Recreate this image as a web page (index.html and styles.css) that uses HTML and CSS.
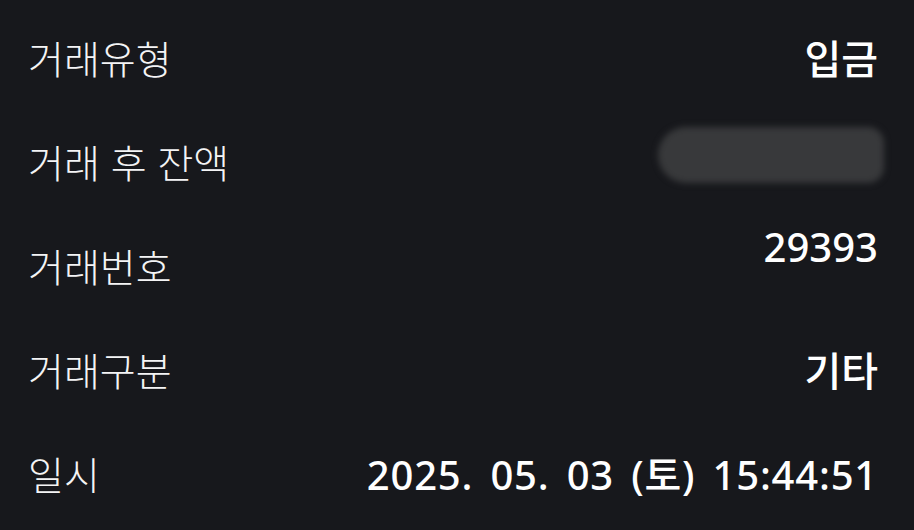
FILE: index.html
```html
<!DOCTYPE html>
<html lang="ko">
<head>
<meta charset="utf-8">
<link rel="stylesheet" href="styles.css">
</head>
<body>
<div class="list">
  <div class="row"><span class="label">거래유형</span><span class="value">입금</span></div>
  <div class="row"><span class="label">거래 후 잔액</span><span class="redact"></span></div>
  <div class="row"><span class="label">거래번호</span><span class="value raised">29393</span></div>
  <div class="row"><span class="label">거래구분</span><span class="value">기타</span></div>
  <div class="row"><span class="label">일시</span><span class="value date">2025. 05. 03 (토) 15:44:51</span></div>
</div>
</body>
</html>
```
FILE: styles.css
```css
html, body {
  margin: 0;
  padding: 0;
  background: #17181c;
}
body {
  width: 914px;
  height: 530px;
  overflow: hidden;
  font-family: "Noto Sans", "Noto Sans CJK KR", sans-serif;
  color: #ffffff;
}
.list {
  display: flex;
  flex-direction: column;
  padding: 5px 36px 0 28px;
}
.row {
  height: 104px;
  display: flex;
  align-items: center;
  justify-content: space-between;
}
.label {
  font-family: "Noto Sans CJK KR", sans-serif;
  font-size: 39px;
  font-weight: 300;
  color: #f4f4f5;
}
.value {
  font-family: "Noto Sans", "Noto Sans CJK KR", sans-serif;
  font-size: 40px;
  font-weight: 500;
  letter-spacing: 0;
  color: #ffffff;
}
.date {
  letter-spacing: 0.8px;
  word-spacing: 6px;
}
.raised {
  margin-bottom: 38px;
}
.redact {
  width: 226px;
  height: 56px;
  margin-right: -6px;
  margin-bottom: 12px;
  background: #38393b;
  border-radius: 28px 16px 16px 28px;
  filter: blur(3px);
}
```
